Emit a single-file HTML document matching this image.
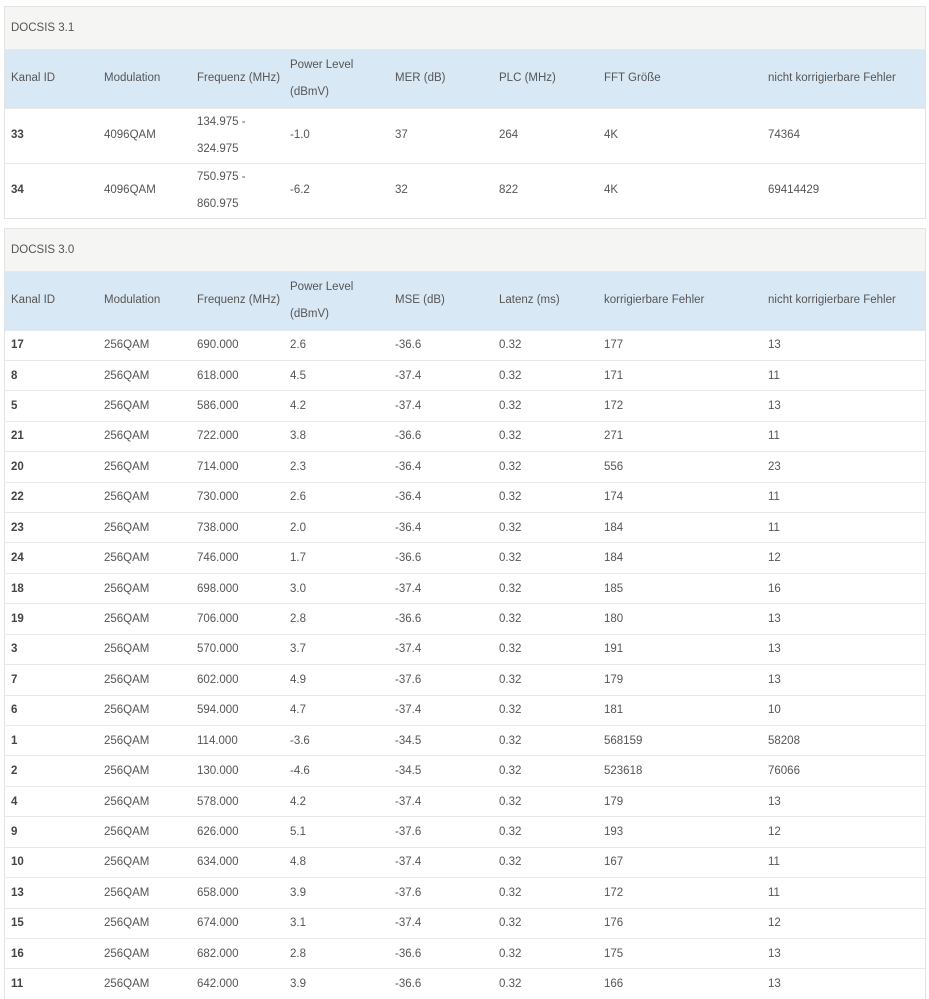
<!DOCTYPE html>
<html><head><meta charset="utf-8"><style>
body{margin:0;background:#fff;font-family:"Liberation Sans",sans-serif;font-size:11.5px;color:#555;width:929px;height:999px;overflow:hidden}
.box{position:absolute;left:4px;width:920px;border:1px solid #e3e3e3;border-bottom:1px solid #e3e3e3}
.title{height:42px;background:#f5f5f3;line-height:42px;padding-left:6px;color:#555;border-bottom:1px solid #e8e8e8}
table{border-collapse:collapse;width:920px;table-layout:fixed}
td,th{padding:0 0 0 6px;text-align:left;font-weight:normal;vertical-align:middle}
thead tr{background:#d9e8f5;height:58px}
th{line-height:27px}
tbody td{border-top:1px solid #e8e8e8}
td.id{font-weight:bold;color:#444}
.b1 tbody tr{height:53px}
.b1 td{line-height:27px}
.b2 tbody tr{height:30.43px}
</style></head><body>
<div class="box b1" style="top:6px">
<div class="title">DOCSIS 3.1</div>
<table>
<colgroup><col style="width:93px"><col style="width:93px"><col style="width:93px"><col style="width:105px"><col style="width:104px"><col style="width:105px"><col style="width:164px"><col></colgroup>
<thead><tr><th>Kanal ID</th><th>Modulation</th><th>Frequenz (MHz)</th><th>Power Level<br>(dBmV)</th><th>MER (dB)</th><th>PLC (MHz)</th><th>FFT Größe</th><th>nicht korrigierbare Fehler</th></tr></thead>
<tbody>
<tr><td class="id">33</td><td>4096QAM</td><td>134.975 -<br>324.975</td><td>-1.0</td><td>37</td><td>264</td><td>4K</td><td>74364</td></tr>
<tr><td class="id">34</td><td>4096QAM</td><td>750.975 -<br>860.975</td><td>-6.2</td><td>32</td><td>822</td><td>4K</td><td>69414429</td></tr>
</tbody></table></div>
<div class="box b2" style="top:228px;border-bottom:none">
<div class="title">DOCSIS 3.0</div>
<table>
<colgroup><col style="width:93px"><col style="width:93px"><col style="width:93px"><col style="width:105px"><col style="width:104px"><col style="width:105px"><col style="width:164px"><col></colgroup>
<thead><tr><th>Kanal ID</th><th>Modulation</th><th>Frequenz (MHz)</th><th>Power Level<br>(dBmV)</th><th>MSE (dB)</th><th>Latenz (ms)</th><th>korrigierbare Fehler</th><th>nicht korrigierbare Fehler</th></tr></thead>
<tbody>
<tr><td class="id">17</td><td>256QAM</td><td>690.000</td><td>2.6</td><td>-36.6</td><td>0.32</td><td>177</td><td>13</td></tr>
<tr><td class="id">8</td><td>256QAM</td><td>618.000</td><td>4.5</td><td>-37.4</td><td>0.32</td><td>171</td><td>11</td></tr>
<tr><td class="id">5</td><td>256QAM</td><td>586.000</td><td>4.2</td><td>-37.4</td><td>0.32</td><td>172</td><td>13</td></tr>
<tr><td class="id">21</td><td>256QAM</td><td>722.000</td><td>3.8</td><td>-36.6</td><td>0.32</td><td>271</td><td>11</td></tr>
<tr><td class="id">20</td><td>256QAM</td><td>714.000</td><td>2.3</td><td>-36.4</td><td>0.32</td><td>556</td><td>23</td></tr>
<tr><td class="id">22</td><td>256QAM</td><td>730.000</td><td>2.6</td><td>-36.4</td><td>0.32</td><td>174</td><td>11</td></tr>
<tr><td class="id">23</td><td>256QAM</td><td>738.000</td><td>2.0</td><td>-36.4</td><td>0.32</td><td>184</td><td>11</td></tr>
<tr><td class="id">24</td><td>256QAM</td><td>746.000</td><td>1.7</td><td>-36.6</td><td>0.32</td><td>184</td><td>12</td></tr>
<tr><td class="id">18</td><td>256QAM</td><td>698.000</td><td>3.0</td><td>-37.4</td><td>0.32</td><td>185</td><td>16</td></tr>
<tr><td class="id">19</td><td>256QAM</td><td>706.000</td><td>2.8</td><td>-36.6</td><td>0.32</td><td>180</td><td>13</td></tr>
<tr><td class="id">3</td><td>256QAM</td><td>570.000</td><td>3.7</td><td>-37.4</td><td>0.32</td><td>191</td><td>13</td></tr>
<tr><td class="id">7</td><td>256QAM</td><td>602.000</td><td>4.9</td><td>-37.6</td><td>0.32</td><td>179</td><td>13</td></tr>
<tr><td class="id">6</td><td>256QAM</td><td>594.000</td><td>4.7</td><td>-37.4</td><td>0.32</td><td>181</td><td>10</td></tr>
<tr><td class="id">1</td><td>256QAM</td><td>114.000</td><td>-3.6</td><td>-34.5</td><td>0.32</td><td>568159</td><td>58208</td></tr>
<tr><td class="id">2</td><td>256QAM</td><td>130.000</td><td>-4.6</td><td>-34.5</td><td>0.32</td><td>523618</td><td>76066</td></tr>
<tr><td class="id">4</td><td>256QAM</td><td>578.000</td><td>4.2</td><td>-37.4</td><td>0.32</td><td>179</td><td>13</td></tr>
<tr><td class="id">9</td><td>256QAM</td><td>626.000</td><td>5.1</td><td>-37.6</td><td>0.32</td><td>193</td><td>12</td></tr>
<tr><td class="id">10</td><td>256QAM</td><td>634.000</td><td>4.8</td><td>-37.4</td><td>0.32</td><td>167</td><td>11</td></tr>
<tr><td class="id">13</td><td>256QAM</td><td>658.000</td><td>3.9</td><td>-37.6</td><td>0.32</td><td>172</td><td>11</td></tr>
<tr><td class="id">15</td><td>256QAM</td><td>674.000</td><td>3.1</td><td>-37.4</td><td>0.32</td><td>176</td><td>12</td></tr>
<tr><td class="id">16</td><td>256QAM</td><td>682.000</td><td>2.8</td><td>-36.6</td><td>0.32</td><td>175</td><td>13</td></tr>
<tr><td class="id">11</td><td>256QAM</td><td>642.000</td><td>3.9</td><td>-36.6</td><td>0.32</td><td>166</td><td>13</td></tr>
</tbody></table></div>
</body></html>
